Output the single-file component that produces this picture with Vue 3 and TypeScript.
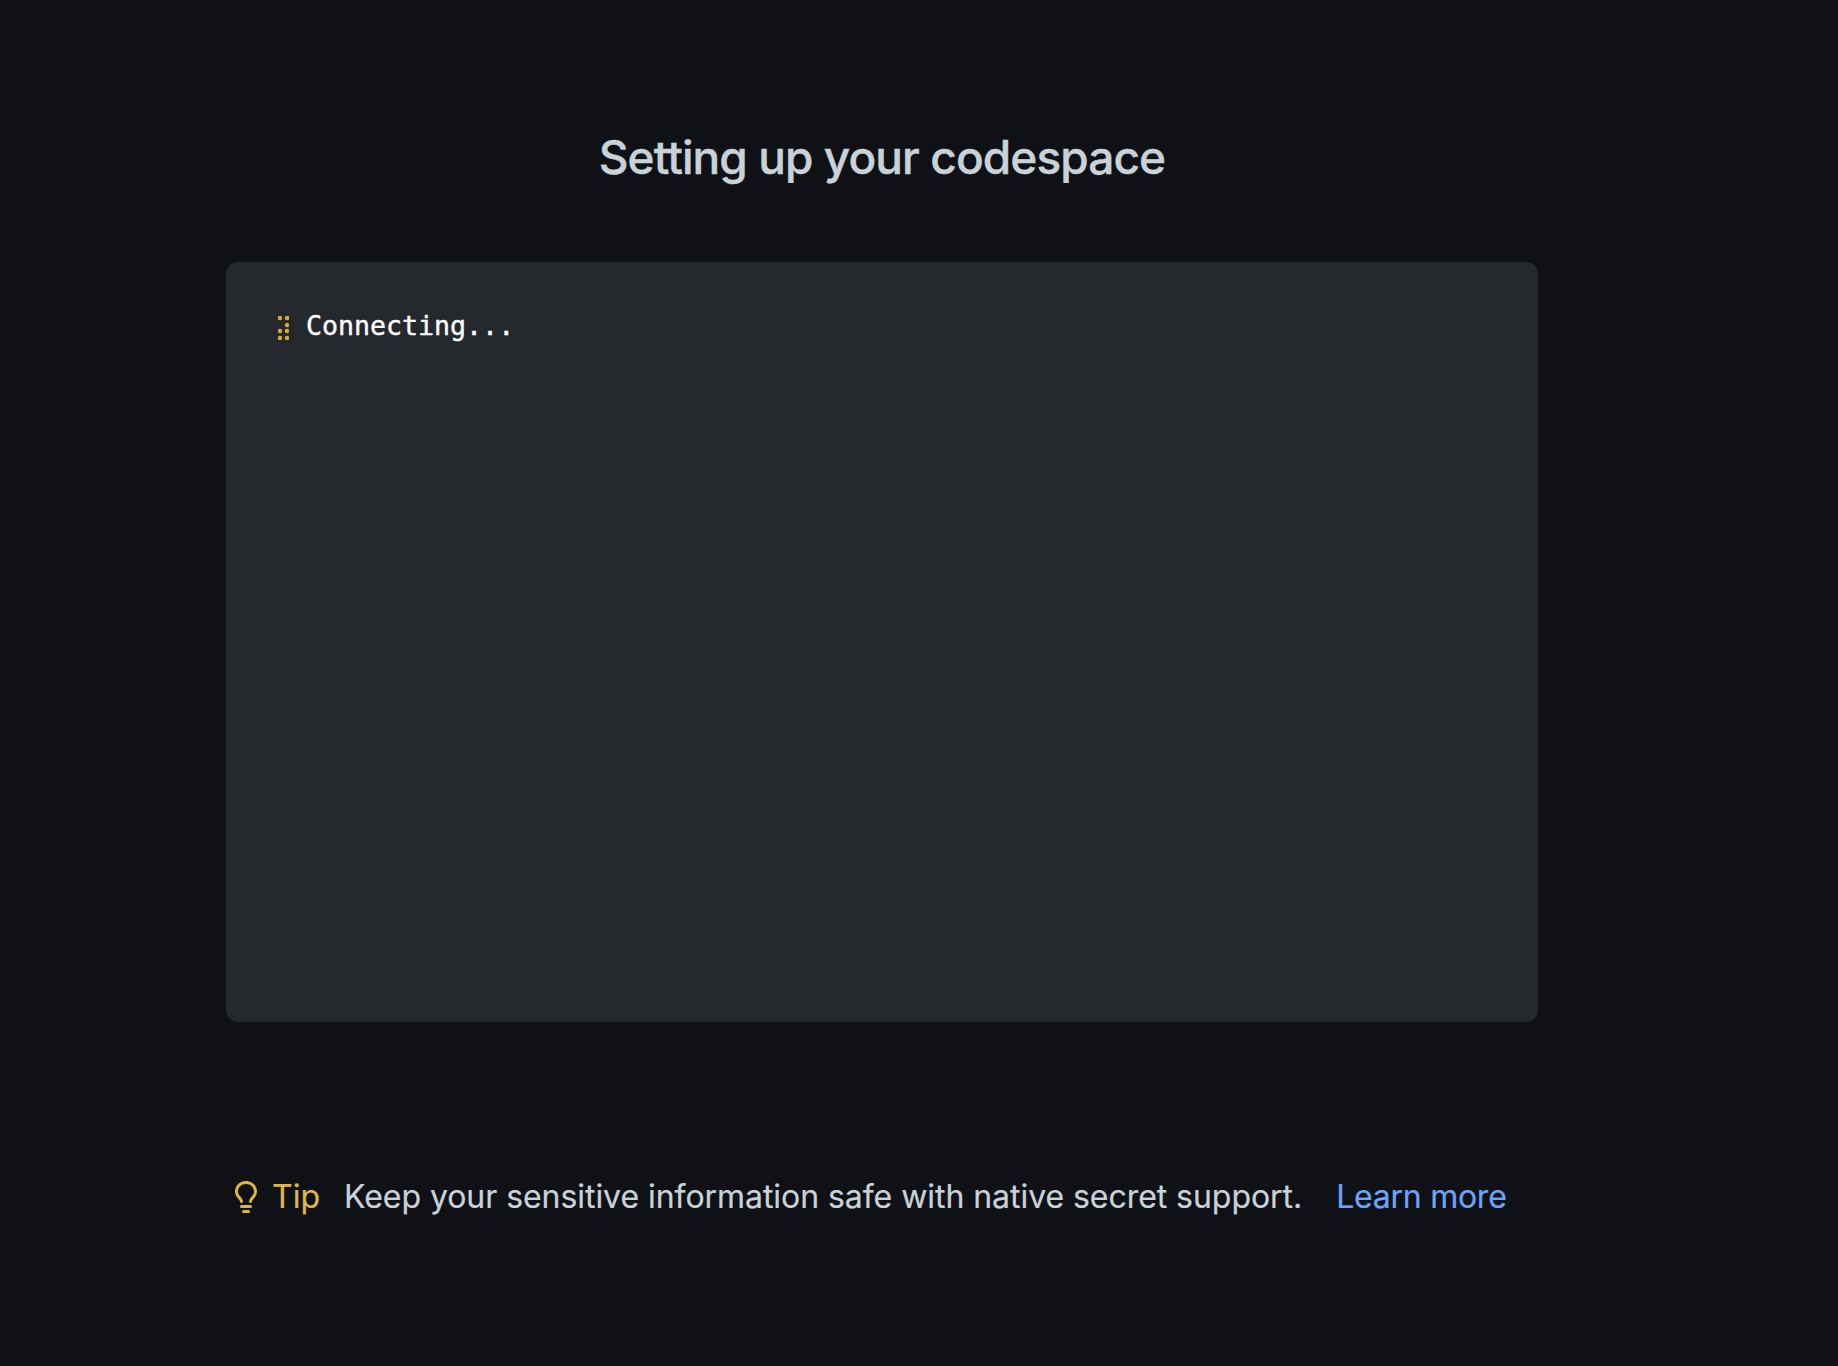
<script setup lang="ts">
const dots: [number, number][] = [[0, 0], [7, 0], [7, 7], [0, 13], [7, 13], [0, 20], [7, 20]];
</script>

<template>
  <div class="page">
    <h1 class="title">Setting up your codespace</h1>
    <div class="log">
      <div class="line">
        <svg class="spinner" width="11" height="24" viewBox="0 0 11 24" aria-hidden="true">
          <circle v-for="(d, i) in dots" :key="i" :cx="d[0] + 2" :cy="d[1] + 2" r="2.2" />
        </svg>
        <span class="status">Connecting...</span>
      </div>
    </div>
    <div class="tip">
      <svg class="bulb" width="32" height="32" viewBox="0 0 16 16" aria-hidden="true">
        <path d="M8 1.5c-2.363 0-4 1.69-4 3.75 0 .984.424 1.625.984 2.304l.214.253c.223.264.47.556.673.848.284.411.537.896.621 1.49a.75.75 0 0 1-1.484.211c-.04-.282-.163-.547-.37-.847a8.456 8.456 0 0 0-.542-.68c-.084-.1-.173-.205-.268-.32C3.201 7.75 2.5 6.766 2.5 5.25 2.5 2.31 4.863 0 8 0s5.5 2.31 5.5 5.25c0 1.516-.701 2.5-1.328 3.259-.095.115-.184.22-.268.319-.207.245-.383.453-.541.681-.208.3-.33.565-.37.847a.751.751 0 0 1-1.485-.212c.084-.593.337-1.078.621-1.489.203-.292.45-.584.673-.848.075-.088.147-.173.213-.253.561-.679.985-1.32.985-2.304 0-2.06-1.637-3.75-4-3.75ZM5.75 12h4.5a.75.75 0 0 1 0 1.5h-4.5a.75.75 0 0 1 0-1.5ZM6 15.25a.75.75 0 0 1 .75-.75h2.5a.75.75 0 0 1 0 1.5h-2.5a.75.75 0 0 1-.75-.75Z" />
      </svg>
      <span class="tip-label">Tip</span>
      <span class="tip-text">Keep your sensitive information safe with native secret support.</span>
      <a class="tip-link" href="#">Learn more</a>
    </div>
  </div>
</template>

<style scoped>
.page {
  box-sizing: border-box;
  width: 1838px;
  height: 1366px;
  padding: 128px 300px 0 226px;
  background: #0f1116;
  font-family: Inter, "Noto Sans", sans-serif;
}
.title {
  margin: 0;
  height: 72px;
  font-size: 46px;
  line-height: 58px;
  font-weight: 500;
  letter-spacing: -0.92px;
  text-align: center;
  color: #c9d1d9;
  -webkit-text-stroke: 0.4px #c9d1d9;
}
.log {
  box-sizing: border-box;
  height: 760px;
  margin-top: 62px;
  padding: 44px 52px;
  border-radius: 12px;
  background: #25282d;
}
.line {
  display: flex;
  align-items: flex-start;
  gap: 17px;
}
.spinner {
  margin-top: 10px;
  fill: #d8ac33;
}
.status {
  font-family: "DejaVu Sans Mono", monospace;
  font-size: 26.6px;
  line-height: 40px;
  color: #ffffff;
  -webkit-text-stroke: 0.4px #ffffff;
}
.tip {
  display: flex;
  align-items: center;
  height: 40px;
  margin-top: 155px;
  margin-right: -40px;
  font-size: 32px;
  line-height: 40px;
  white-space: nowrap;
  -webkit-text-stroke: 0.2px currentColor;
}
.bulb {
  margin-left: 4px;
  margin-right: 10px;
  fill: #e0b343;
}
.tip-label {
  color: #e0b54a;
  margin-right: 24px;
}
.tip-text {
  color: #c9d1d9;
  letter-spacing: -0.05px;
  margin-right: 34px;
}
.tip-link {
  color: #6ca4f8;
  letter-spacing: -0.25px;
  text-decoration: none;
}
</style>
